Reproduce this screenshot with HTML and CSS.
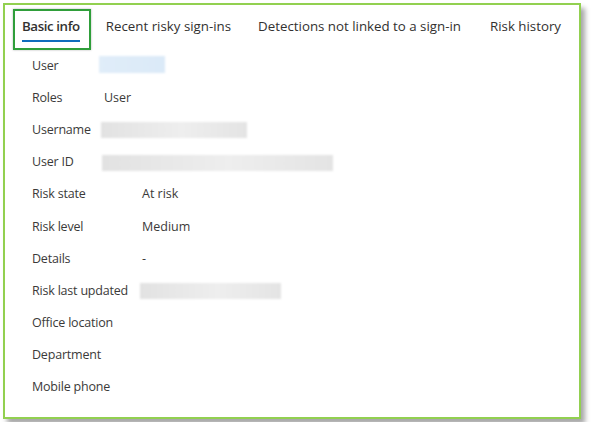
FILE: index.html
```html
<!DOCTYPE html>
<html lang="en">
<head>
    <meta charset="UTF-8">
    <title>Risky user details</title>
    <link rel="stylesheet" href="styles.css">
</head>
<body>
    <div class="panel">
        <div class="tabs">
            <div class="tab active"><span>Basic info</span></div>
            <div class="tab">Recent risky sign-ins</div>
            <div class="tab">Detections not linked to a sign-in</div>
            <div class="tab">Risk history</div>
        </div>

        <!-- identity rows -->
        <div class="details ident">
            <div class="label">User</div>
            <div class="value"><div class="blur blue w66"></div></div>
            <div class="label">Roles</div>
            <div class="value shift">User</div>
            <div class="label">Username</div>
            <div class="value"><div class="blur w146"></div></div>
            <div class="label">User ID</div>
            <div class="value"><div class="blur w231"></div></div>
        </div>

        <!-- risk rows -->
        <div class="details risk">
            <div class="label">Risk state</div>
            <div class="value">At risk</div>
            <div class="label">Risk level</div>
            <div class="value">Medium</div>
            <div class="label">Details</div>
            <div class="value">-</div>
            <div class="label">Risk last updated</div>
            <div class="value"><div class="blur w141 back"></div></div>
            <div class="label">Office location</div>
            <div class="value"></div>
            <div class="label">Department</div>
            <div class="value"></div>
            <div class="label">Mobile phone</div>
            <div class="value"></div>
        </div>
    </div>
</body>
</html>
```

FILE: styles.css
```css
* {
    margin: 0;
    padding: 0;
    box-sizing: border-box;
}

body {
    font-family: "Open Sans", "Noto Sans", sans-serif;
    background-color: #fff;
    color: #323130;
    padding: 3px;
}

.panel {
    width: 578px;
    height: 416px;
    border: 2px solid #92d050;
    background-color: #fff;
    box-shadow: 4px 5px 5px rgba(0, 0, 0, 0.35);
    padding: 5px 0 0 8px;
}

/* tabs */
.tabs {
    display: flex;
    align-items: flex-start;
    font-size: 13.3px;
    color: #323130;
    white-space: nowrap;
}

.tab {
    flex-shrink: 0;
    padding: 7px 0 0;
    margin-right: 27px;
    line-height: 18px;
}

.tab.active {
    border: 2px solid #2f9e3a;
    box-shadow: 0 0 2px rgba(0, 0, 0, 0.3);
    padding: 6px 9px 0 7px;
    margin-right: 15px;
    margin-top: -1px;
    font-weight: 600;
    letter-spacing: -0.4px;
    height: 41px;
}

.tab.active span {
    display: block;
    padding-bottom: 5px;
    border-bottom: 2px solid #0f6cbd;
}

.tab:nth-child(3) {
    margin-right: 29px;
}

/* detail rows */
.details {
    display: grid;
    font-size: 12.5px;
    padding-left: 19px;
    grid-auto-rows: 32.2px;
    align-items: center;
    color: #3b3a39;
}

.ident {
    margin-top: -1px;
    grid-template-columns: 69px 1fr;
}

.risk {
    grid-template-columns: 110px 1fr;
}

.label {
    white-space: nowrap;
    letter-spacing: -0.2px;
}

.value.shift {
    padding-left: 3px;
}

.blur {
    height: 16px;
    background: linear-gradient(90deg, #e2e2e2, #eeeeee 55%, #e4e4e4);
    filter: blur(0.8px);
    margin-top: 2px;
}

.blur.blue {
    background: linear-gradient(90deg, #e0edf9, #dbeaf8);
    height: 17px;
    margin-top: -2px;
}

.w66 { width: 66px; margin-left: -2px; }
.w146 { width: 146px; }
.w231 { width: 231px; margin-left: 1px; }
.w141 { width: 141px; }
.back { margin-left: -2px; }
```
